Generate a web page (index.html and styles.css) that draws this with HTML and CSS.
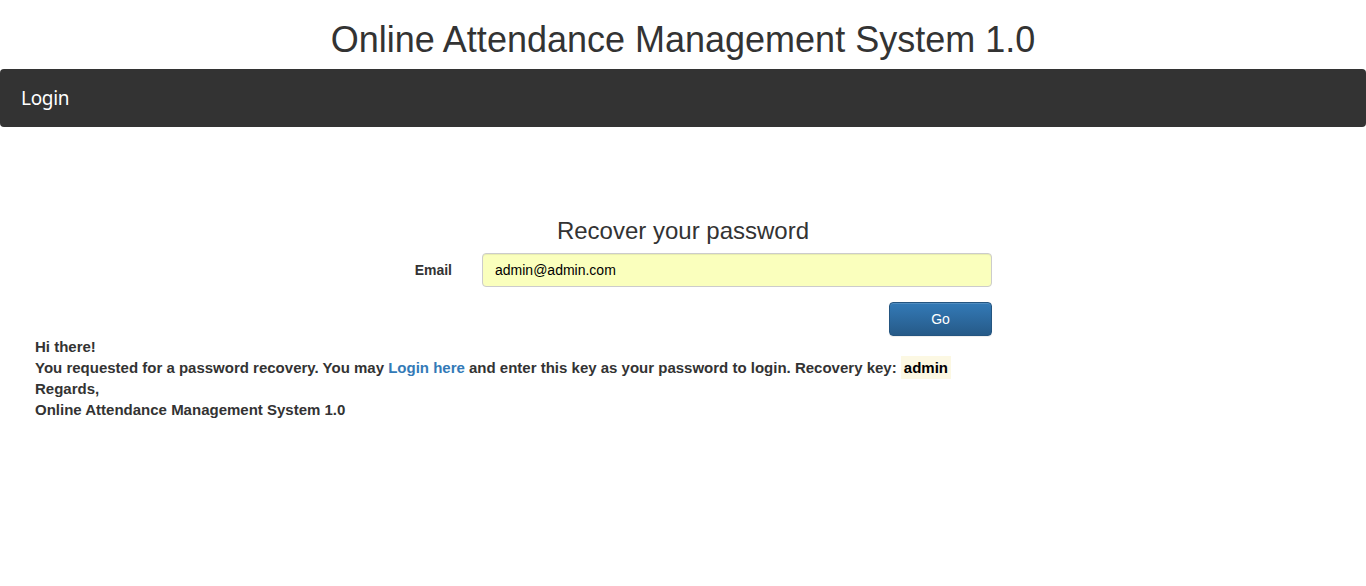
FILE: index.html
```html
<!DOCTYPE html>
<html lang="en">
<head>
<meta charset="utf-8">
<title>Online Attendance Management System 1.0</title>
<link rel="stylesheet" href="styles.css">
</head>
<body>
<header class="page-header">
  <h1 class="site-title">Online Attendance Management System 1.0</h1>
  <nav class="navbar">
    <a class="navbar-brand" href="#">Login</a>
  </nav>
</header>
<main class="content">
  <section class="recover">
    <h3 class="recover-title">Recover your password</h3>
    <form class="recover-form">
      <div class="form-row">
        <label class="form-label" for="email">Email</label>
        <input class="form-input" id="email" type="email" value="admin@admin.com">
      </div>
      <div class="form-row">
        <div></div>
        <div class="form-actions"><button class="btn-go" type="button">Go</button></div>
      </div>
    </form>
  </section>
  <div class="message">
    Hi there!<br>
    You requested for a password recovery. You may <a class="link" href="#">Login here</a> and enter this key as your password to login. Recovery key: <mark class="key">admin</mark><br>
    Regards,<br>
    Online Attendance Management System 1.0
  </div>
</main>
</body>
</html>
```
FILE: styles.css
```css
html, body {
  margin: 0;
  padding: 0;
  background: #fff;
}
body {
  font-family: "Liberation Sans", Arial, sans-serif;
  font-size: 14px;
  line-height: 1.42857;
  color: #333;
}
.site-title {
  margin: 20px 0 9px;
  font-size: 36px;
  font-weight: 400;
  line-height: 40px;
  text-align: center;
  color: #333;
}
.navbar {
  height: 58px;
  background: #333;
  border-radius: 4px;
  display: flex;
  align-items: center;
  padding: 0 21px;
}
.navbar-brand {
  font-family: "Noto Sans", "Open Sans", sans-serif;
  font-size: 19px;
  color: #fff;
  text-decoration: none;
  letter-spacing: -0.3px;
  padding-top: 2px;
}
.content {
  padding-top: 91px;
}
.recover-title {
  margin: 0;
  font-size: 24px;
  font-weight: 400;
  line-height: 26px;
  text-align: center;
  color: #333;
}
.recover-form {
  margin-top: 9px;
}
.form-row {
  display: grid;
  grid-template-columns: 467px 510px;
  column-gap: 15px;
  align-items: center;
}
.form-row + .form-row {
  margin-top: 15px;
}
.form-label {
  text-align: right;
  padding-right: 15px;
  padding-top: 2px;
  font-weight: 700;
  color: #333;
}
.form-input {
  box-sizing: border-box;
  width: 510px;
  height: 34px;
  padding: 6px 12px;
  font-family: "Liberation Sans", Arial, sans-serif;
  font-size: 14px;
  color: #000;
  background: #faffbd;
  border: 1px solid #ccc;
  border-radius: 4px;
  box-shadow: inset 0 1px 1px rgba(0,0,0,.075);
  outline: none;
}
.form-actions {
  display: flex;
  justify-content: flex-end;
}
.btn-go {
  box-sizing: border-box;
  width: 103px;
  height: 34px;
  font-family: "Liberation Sans", Arial, sans-serif;
  font-size: 14px;
  color: #fff;
  background: linear-gradient(to bottom, #337ab7 0%, #265a88 100%);
  border: 1px solid #245580;
  border-radius: 4px;
  box-shadow: inset 0 1px 0 rgba(255,255,255,.15), 0 1px 1px rgba(0,0,0,.075);
  cursor: pointer;
}
.message {
  padding: 0 35px;
  font-size: 15px;
  font-weight: 700;
  line-height: 21px;
  color: #333;
}
.link {
  color: #337ab7;
  text-decoration: none;
}
.key {
  background: #fcf8e3;
  color: #000;
  padding: 3px 3px;
}
```
